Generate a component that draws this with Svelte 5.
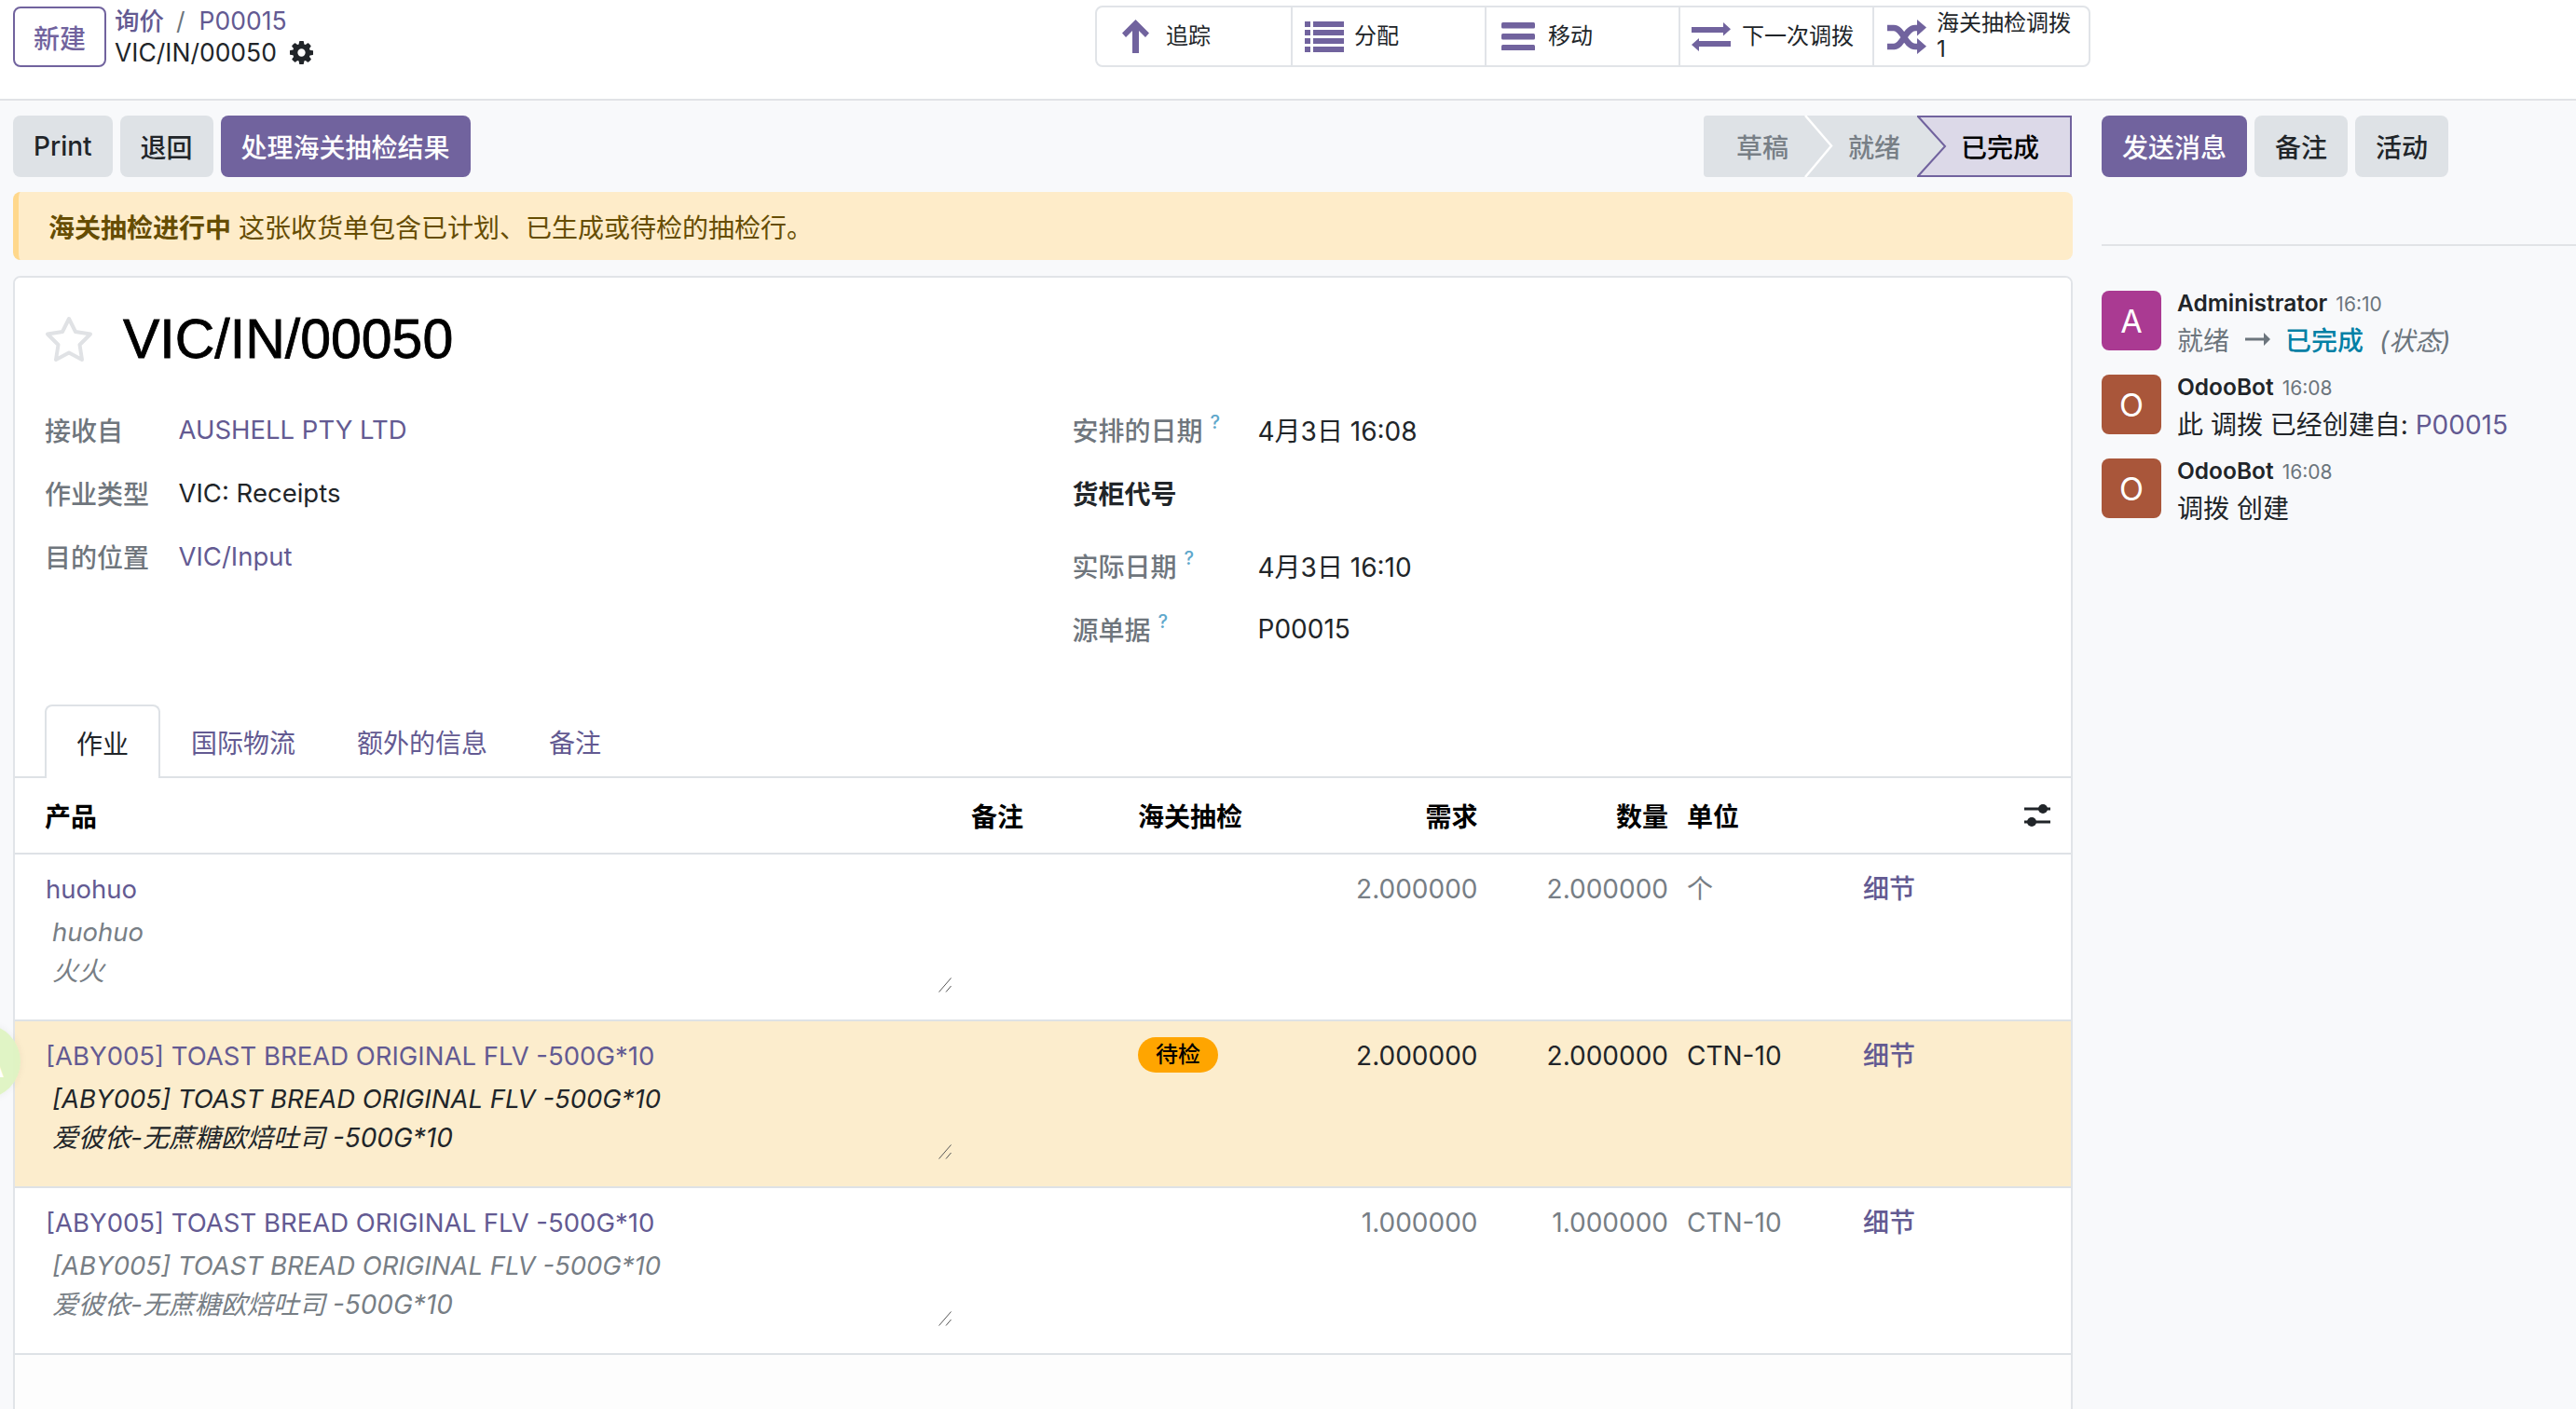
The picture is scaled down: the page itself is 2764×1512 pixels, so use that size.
<script>
	const rows = [
		{ name: 'huohuo', desc: ['huohuo', '火火'], badge: '', demand: '2.000000', qty: '2.000000', uom: '个', tone: 'muted' },
		{ name: '[ABY005] TOAST BREAD ORIGINAL FLV -500G*10', desc: ['[ABY005] TOAST BREAD ORIGINAL FLV -500G*10', '爱彼依-无蔗糖欧焙吐司 -500G*10'], badge: '待检', demand: '2.000000', qty: '2.000000', uom: 'CTN-10', tone: 'hold' },
		{ name: '[ABY005] TOAST BREAD ORIGINAL FLV -500G*10', desc: ['[ABY005] TOAST BREAD ORIGINAL FLV -500G*10', '爱彼依-无蔗糖欧焙吐司 -500G*10'], badge: '', demand: '1.000000', qty: '1.000000', uom: 'CTN-10', tone: 'muted' }
	];

	const messages = [
		{ initial: 'A', color: '#aa3a92', author: 'Administrator', time: '16:10', kind: 'status' },
		{ initial: 'O', color: '#a9563a', author: 'OdooBot', time: '16:08', kind: 'origin' },
		{ initial: 'O', color: '#a9563a', author: 'OdooBot', time: '16:08', kind: 'created' }
	];
</script>

<div class="page">
	<header class="topbar">
		<div class="topbar-left">
			<button class="btn-new">新建</button>
			<div class="crumbs">
				<div class="crumb-links"><a href="#a">询价</a><span class="slash">/</span><a href="#b">P00015</a></div>
				<div class="crumb-current">
					VIC/IN/00050
					<svg class="gear" viewBox="0 128 1536 1536"><path d="M1024 896q0-106-75-181t-181-75-181 75-75 181 75 181 181 75 181-75 75-181zm512-109v222q0 12-8 23t-20 13l-185 28q-19 54-39 91 35 50 107 138 10 12 10 25t-9 23q-27 37-99 108t-94 71q-12 0-26-9l-138-108q-44 23-91 38-16 136-29 186-7 28-36 28h-222q-14 0-24.5-8.5t-11.5-21.5l-28-184q-49-16-90-37l-141 107q-10 9-25 9-14 0-25-11-126-114-165-168-7-10-7-23 0-12 8-23 15-21 51-66.5t54-70.5q-27-50-41-99l-183-27q-13-2-21-12.5t-8-23.5v-222q0-12 8-23t19-13l186-28q14-46 39-92-40-57-107-138-10-12-10-24 0-10 9-23 26-36 98.5-107.5t94.5-71.5q13 0 26 10l138 107q44-23 91-38 16-136 29-186 7-28 36-28h222q14 0 24.5 8.5t11.5 21.5l28 184q49 16 90 37l142-107q9-9 24-9 13 0 25 10 129 119 165 170 7 8 7 22 0 12-8 23-15 21-51 66.5t-54 70.5q26 50 41 98l183 28q13 2 21 12.5t8 23.5z" /></svg>
				</div>
			</div>
		</div>
		<div class="stat-group">
			<div class="stat">
				<svg class="ic" style="margin-left:27px" width="29" height="36" viewBox="0 0 29 36"><path d="M14.5 0 29 14.5 25 19 18 12V36H11V12L4 19 0 14.5Z" /></svg>
				<span class="stat-label" style="margin-left:18px">追踪</span>
			</div>
			<div class="stat">
				<svg class="ic" style="margin-left:13px" width="42" height="33" viewBox="0 0 42 33">
					{#each [0, 9, 18, 27] as y}
						<rect x="0" {y} width="6" height="6" /><rect x="9" {y} width="33" height="6" />
					{/each}
				</svg>
				<span class="stat-label" style="margin-left:11px">分配</span>
			</div>
			<div class="stat">
				<svg class="ic" style="margin-left:16px" width="36" height="30" viewBox="0 0 36 30">
					{#each [0, 12, 24] as y}
						<rect x="0" {y} width="36" height="6.4" rx="1.5" />
					{/each}
				</svg>
				<span class="stat-label" style="margin-left:14px">移动</span>
			</div>
			<div class="stat">
				<svg class="ic" style="margin-left:12px" width="42" height="31" viewBox="0 0 42 31"><path d="M0 5H34V0L42 7.3 34 14.4V11H0ZM42 20H8V17L0 24 8 31V26H42Z" /></svg>
				<span class="stat-label" style="margin-left:12px">下一次调拨</span>
			</div>
			<div class="stat last">
				<svg class="ic" style="margin-left:14px" width="42" height="37" viewBox="0 0 42 37">
					<path class="cross" d="M0 9H7C17 9 19 29 30 29H34M0 29H7C17 29 19 9 30 9H34" />
					<path d="M32 0 42 8.5 32 17.5ZM32 20 42 28.7 32 37Z" />
				</svg>
				<span class="stat-label two" style="margin-left:11px">海关抽检调拨<br />1</span>
			</div>
		</div>
	</header>

	<div class="body">
		<main class="main">
			<div class="actions">
				<button class="btn">Print</button>
				<button class="btn">退回</button>
				<button class="btn primary">处理海关抽检结果</button>
				<div class="statusbar">
					<div class="seg one">
						草稿
						<svg class="chev" width="32" height="66" viewBox="0 0 32 66"><path d="M1 0 29 32.5 1 66" /></svg>
					</div>
					<div class="seg two">就绪</div>
					<div class="seg done">
						<svg class="done-bg" width="166" height="66" viewBox="0 0 166 66"><path d="M1 1H165V65H1L30 33Z" /></svg>
						<span>已完成</span>
					</div>
				</div>
			</div>

			<div class="alert"><strong>海关抽检进行中</strong> 这张收货单包含已计划、已生成或待检的抽检行。</div>

			<section class="sheet">
				<div class="title-row">
					<svg class="star" width="52" height="50" viewBox="0 0 52 50"><polygon points="26,3 33,17 49,19.500 37.500,31 40,47 26,39.500 12,47 14.500,31 3,19.500 19,17" /></svg>
					<h1>VIC/IN/00050</h1>
				</div>

				<div class="fields">
					<div class="col-left">
						<div class="field"><span class="label">接收自</span><a class="en" href="#c">AUSHELL PTY LTD</a></div>
						<div class="field"><span class="label">作业类型</span><span class="en">VIC: Receipts</span></div>
						<div class="field"><span class="label">目的位置</span><a class="en" href="#d">VIC/Input</a></div>
					</div>
					<div class="col-right">
						<div class="field"><span class="label">安排的日期<sup>?</sup></span><span>4月3日 16:08</span></div>
						<div class="field"><span class="label strong">货柜代号</span></div>
						<div class="field gap"><span class="label">实际日期<sup>?</sup></span><span>4月3日 16:10</span></div>
						<div class="field"><span class="label">源单据<sup>?</sup></span><span>P00015</span></div>
					</div>
				</div>

				<nav class="tabs">
					<a class="tab active" href="#e">作业</a>
					<a class="tab" href="#f">国际物流</a>
					<a class="tab" href="#g">额外的信息</a>
					<a class="tab" href="#h">备注</a>
				</nav>

				<table class="lines">
					<colgroup>
						<col style="width:1016px" /><col style="width:179px" /><col style="width:169px" /><col style="width:215.500px" /><col style="width:204.500px" /><col style="width:189px" /><col style="width:161px" /><col />
					</colgroup>
					<thead>
						<tr>
							<th class="first">产品</th>
							<th>备注</th>
							<th>海关抽检</th>
							<th class="num">需求</th>
							<th class="num">数量</th>
							<th>单位</th>
							<th></th>
							<th class="opt">
								<svg width="28" height="24" viewBox="0 0 28 24">
									<rect x="0" y="3.500" width="28" height="3" /><circle cx="20" cy="5" r="5" />
									<rect x="0" y="17.500" width="28" height="3" /><circle cx="8" cy="19" r="5" />
								</svg>
							</th>
						</tr>
					</thead>
					<tbody>
						{#each rows as row}
							<tr class={row.tone}>
								<td class="first">
									<a class="en" href="#i">{row.name}</a>
									<div class="desc">
										{#each row.desc as line, i}
											<div class:en={i === 0}>{line}</div>
										{/each}
										<svg class="grip" width="14" height="16" viewBox="0 0 14 16"><path d="M0.500 15.500 13.500 0.500M8 15.500 13.500 9" /></svg>
									</div>
								</td>
								<td></td>
								<td>
									{#if row.badge}
										<span class="badge">{row.badge}</span>
									{/if}
								</td>
								<td class="num val">{row.demand}</td>
								<td class="num val">{row.qty}</td>
								<td class="val">{row.uom}</td>
								<td><a class="detail" href="#j">细节</a></td>
								<td></td>
							</tr>
						{/each}
					</tbody>
				</table>
			</section>
		</main>

		<aside class="chatter">
			<div class="chatter-actions">
				<button class="btn primary">发送消息</button>
				<button class="btn">备注</button>
				<button class="btn">活动</button>
			</div>
			<div class="thread">
				{#each messages as msg}
					<div class="msg">
						<div class="avatar" style="background:{msg.color}">{msg.initial}</div>
						<div class="msg-body">
							<div class="msg-head"><b>{msg.author}</b><small>{msg.time}</small></div>
							<div class="msg-text">
								{#if msg.kind === 'status'}
									<span class="from">就绪</span>
									<svg class="arrow" width="27" height="14" viewBox="0 0 27 14"><path d="M0 5.500H20V0L27 7 20 14V8.500H0Z" /></svg>
									<span class="to">已完成</span>
									<em>(状态)</em>
								{:else if msg.kind === 'origin'}
									<span>此 调拨 已经创建自: <a href="#k">P00015</a></span>
								{:else}
									<span>调拨 创建</span>
								{/if}
							</div>
						</div>
					</div>
				{/each}
			</div>
		</aside>
	</div>

	<div class="bubble">A</div>
</div>

<style>
	:global(body) {
		margin: 0;
		background: #f8f9fb;
	}

	.page {
		position: relative;
		width: 2764px;
		height: 1512px;
		overflow: hidden;
		font-family: Inter, "Noto Sans CJK SC", sans-serif;
		font-size: 28px;
		color: #212529;
		background: #f8f9fb;
	}

	a {
		color: #635a92;
		text-decoration: none;
	}

	.en {
		font-size: 27.5px;
	}

	.topbar {
		display: flex;
		justify-content: space-between;
		align-items: flex-start;
		height: 108px;
		box-sizing: border-box;
		padding: 6px 521px 0 14px;
		background: #fff;
		border-bottom: 2px solid #e1e3e6;
	}

	.topbar-left {
		display: flex;
		gap: 9px;
		padding-top: 1px;
	}

	.btn-new {
		width: 100px;
		height: 65px;
		background: #fff;
		border: 2px solid #71639e;
		border-radius: 8px;
		color: #71639e;
		font: 500 28px Inter, "Noto Sans CJK SC", sans-serif;
		padding: 0;
	}

	.crumbs {
		margin-top: -2px;
		font-size: 26.500px;
		line-height: 34px;
	}

	.crumb-links a:first-child {
		font-weight: 500;
	}

	.slash {
		margin: 0 15px 0 13px;
		color: #6c757d;
	}

	.crumb-current {
		display: flex;
		align-items: center;
		gap: 14px;
	}

	.gear {
		width: 25px;
		height: 25px;
		fill: #212529;
	}

	.stat-group {
		display: flex;
		height: 66px;
		box-sizing: border-box;
		border: 2px solid #e1e4e8;
		border-radius: 8px;
		background: #fff;
	}

	.stat {
		display: flex;
		align-items: center;
		width: 208px;
		border-left: 2px solid #e1e4e8;
		box-sizing: border-box;
	}

	.stat:first-child {
		border-left: none;
	}

	.stat.last {
		width: 232px;
	}

	.ic {
		flex-shrink: 0;
		fill: #71639e;
	}

	.cross {
		fill: none;
		stroke: #71639e;
		stroke-width: 6.500px;
	}

	.stat-label {
		font-size: 24px;
		white-space: nowrap;
		line-height: 28px;
	}

	.body {
		display: flex;
		gap: 31px;
		padding: 16px 0 0 14px;
	}

	.main {
		width: 2210px;
		flex-shrink: 0;
	}

	.actions {
		display: flex;
		gap: 8px;
		height: 66px;
	}

	.btn {
		height: 66px;
		padding: 0 22px;
		background: #dee2e6;
		border: none;
		border-radius: 8px;
		color: #212529;
		font: 500 28px Inter, "Noto Sans CJK SC", sans-serif;
	}

	.btn.primary {
		background: #71639e;
		color: #fff;
	}

	.statusbar {
		display: flex;
		width: 395px;
		height: 66px;
		margin-left: auto;
		margin-right: 1px;
		background: #dee2e6;
		border-radius: 4px;
		font-weight: 500;
		color: #787f86;
	}

	.seg {
		position: relative;
		display: flex;
		align-items: center;
		box-sizing: border-box;
	}

	.seg.one {
		width: 122px;
		padding-left: 35px;
	}

	.seg.two {
		width: 107px;
		padding-left: 33px;
	}

	.seg.done {
		width: 166px;
		padding-left: 47px;
		color: #000;
	}

	.seg.done span {
		position: relative;
	}

	.chev {
		position: absolute;
		left: 108px;
		top: 0;
		fill: none;
		stroke: #fff;
		stroke-width: 2.500px;
	}

	.done-bg {
		position: absolute;
		left: 0;
		top: 0;
		fill: #dcd9e8;
		stroke: #71639e;
		stroke-width: 2px;
	}

	.alert {
		height: 73px;
		margin-top: 16px;
		padding-left: 32px;
		display: flex;
		align-items: center;
		white-space: pre;
		box-sizing: border-box;
		background: #feecc9;
		border-left: 6px solid #ffd88c;
		border-radius: 8px;
		color: #664d03;
	}

	.sheet {
		margin-top: 17px;
		height: 1300px;
		background: #fdfdfd;
		border: 2px solid #e1e4e8;
		border-radius: 8px;
		overflow: hidden;
	}

	.title-row {
		display: flex;
		align-items: center;
		gap: 32px;
		height: 70px;
		padding: 31px 0 0 32px;
		background: #fff;
	}

	.star {
		fill: none;
		stroke: #e0e2e5;
		stroke-width: 4px;
		stroke-linejoin: round;
	}

	h1 {
		margin: 0;
		font-family: "Liberation Sans", Arial, sans-serif;
		font-size: 59px;
		font-weight: 400;
		color: #000;
		-webkit-text-stroke: 0.8px #000;
	}

	.fields {
		display: flex;
		padding: 28px 0 47px 32px;
		background: #fff;
	}

	.col-left {
		width: 1102.500px;
	}

	.field {
		display: flex;
		align-items: center;
		height: 68px;
	}

	.col-left .label {
		width: 143.500px;
	}

	.col-right .label {
		width: 199px;
	}

	.field.gap {
		margin-top: 10px;
	}

	.label {
		color: #6f767d;
		font-weight: 500;
		flex-shrink: 0;
	}

	.label.strong {
		color: #212529;
		font-weight: 700;
	}

	sup {
		margin-left: 8px;
		font-size: 20px;
		font-weight: 500;
		color: #5fa8cc;
		vertical-align: 13px;
		line-height: 0;
	}

	.tabs {
		display: flex;
		height: 77px;
		padding-left: 32px;
		background: #fff;
		border-bottom: 2px solid #dee2e6;
	}

	.tab {
		display: flex;
		align-items: center;
		padding: 0 33px;
		height: 79px;
		box-sizing: border-box;
	}

	.tab.active {
		padding: 0 32px;
		color: #212529;
		background: #fff;
		border: 2px solid #dee2e6;
		border-bottom: none;
		border-radius: 8px 8px 0 0;
	}

	.lines {
		width: 2206px;
		table-layout: fixed;
		border-collapse: collapse;
		background: #fff;
	}

	th {
		height: 81px;
		padding: 0 10px;
		text-align: left;
		font-weight: 700;
		color: #000;
		border-bottom: 2px solid #dee2e6;
		box-sizing: border-box;
	}

	th.first {
		padding-left: 32px;
	}

	td.first {
		padding-left: 33px;
	}

	th.opt {
		padding: 0 0 0 22px;
		text-align: left;
	}

	.opt svg {
		fill: #212529;
		display: block;
	}

	.num {
		text-align: right;
	}

	tbody tr {
		height: 179px;
		border-bottom: 2px solid #dee2e6;
	}

	td {
		padding: 16px 10px 0;
		vertical-align: top;
		line-height: 42px;
	}

	.desc {
		position: relative;
		margin-top: 4px;
		padding-left: 7px;
		font-style: italic;
		height: 84px;
	}

	.grip {
		position: absolute;
		right: 1px;
		top: 70px;
		fill: none;
		stroke: #555;
		stroke-width: 1px;
	}

	tr.muted .desc,
	tr.muted .val {
		color: #777e85;
	}

	tr.hold {
		background: #fcedcd;
	}

	.badge {
		display: inline-flex;
		align-items: center;
		height: 38px;
		padding: 0 19px;
		margin-top: 1px;
		vertical-align: top;
		background: #ffa500;
		border-radius: 19px;
		font-size: 24px;
		font-weight: 500;
		color: #000;
	}

	.detail {
		font-weight: 500;
	}

	.chatter {
		flex: 1;
	}

	.chatter-actions {
		display: flex;
		gap: 8px;
		padding-bottom: 72px;
		border-bottom: 2px solid #e1e3e6;
	}

	.chatter-actions .btn {
		width: 100px;
		padding: 0;
	}

	.chatter-actions .btn.primary {
		width: 156px;
	}

	.thread {
		display: flex;
		flex-direction: column;
		gap: 26px;
		padding-top: 48px;
	}

	.msg {
		display: flex;
		gap: 17px;
		height: 64px;
	}

	.avatar {
		display: flex;
		align-items: center;
		justify-content: center;
		width: 64px;
		height: 64px;
		border-radius: 8px;
		color: #fff;
		font-size: 34px;
		flex-shrink: 0;
	}

	.msg-head {
		display: flex;
		align-items: baseline;
		gap: 9px;
		height: 28px;
		margin-top: -1px;
		line-height: 28px;
	}

	.msg-head b {
		font-size: 24.500px;
		font-weight: 600;
	}

	.msg-head small {
		font-size: 21px;
		color: #6c757d;
	}

	.msg-text {
		display: flex;
		align-items: center;
		gap: 8px;
		height: 40px;
		white-space: pre;
		margin-top: 5px;
	}

	.from,
	em {
		color: #6c757d;
	}

	.to {
		color: #0180a5;
		font-weight: 500;
	}

	.arrow {
		fill: #6c757d;
		margin: 0 8.500px;
	}

	em {
		margin-left: 9px;
	}

	.bubble {
		position: absolute;
		left: -58px;
		top: 1099px;
		width: 80px;
		height: 80px;
		box-sizing: border-box;
		padding-left: 14px;
		border-radius: 50%;
		background: rgba(222, 243, 194, 0.95);
		box-shadow: 0 0 8px rgba(0, 0, 0, 0.06);
		display: flex;
		align-items: center;
		justify-content: center;
		color: #fff;
		font-size: 46px;
	}
</style>
